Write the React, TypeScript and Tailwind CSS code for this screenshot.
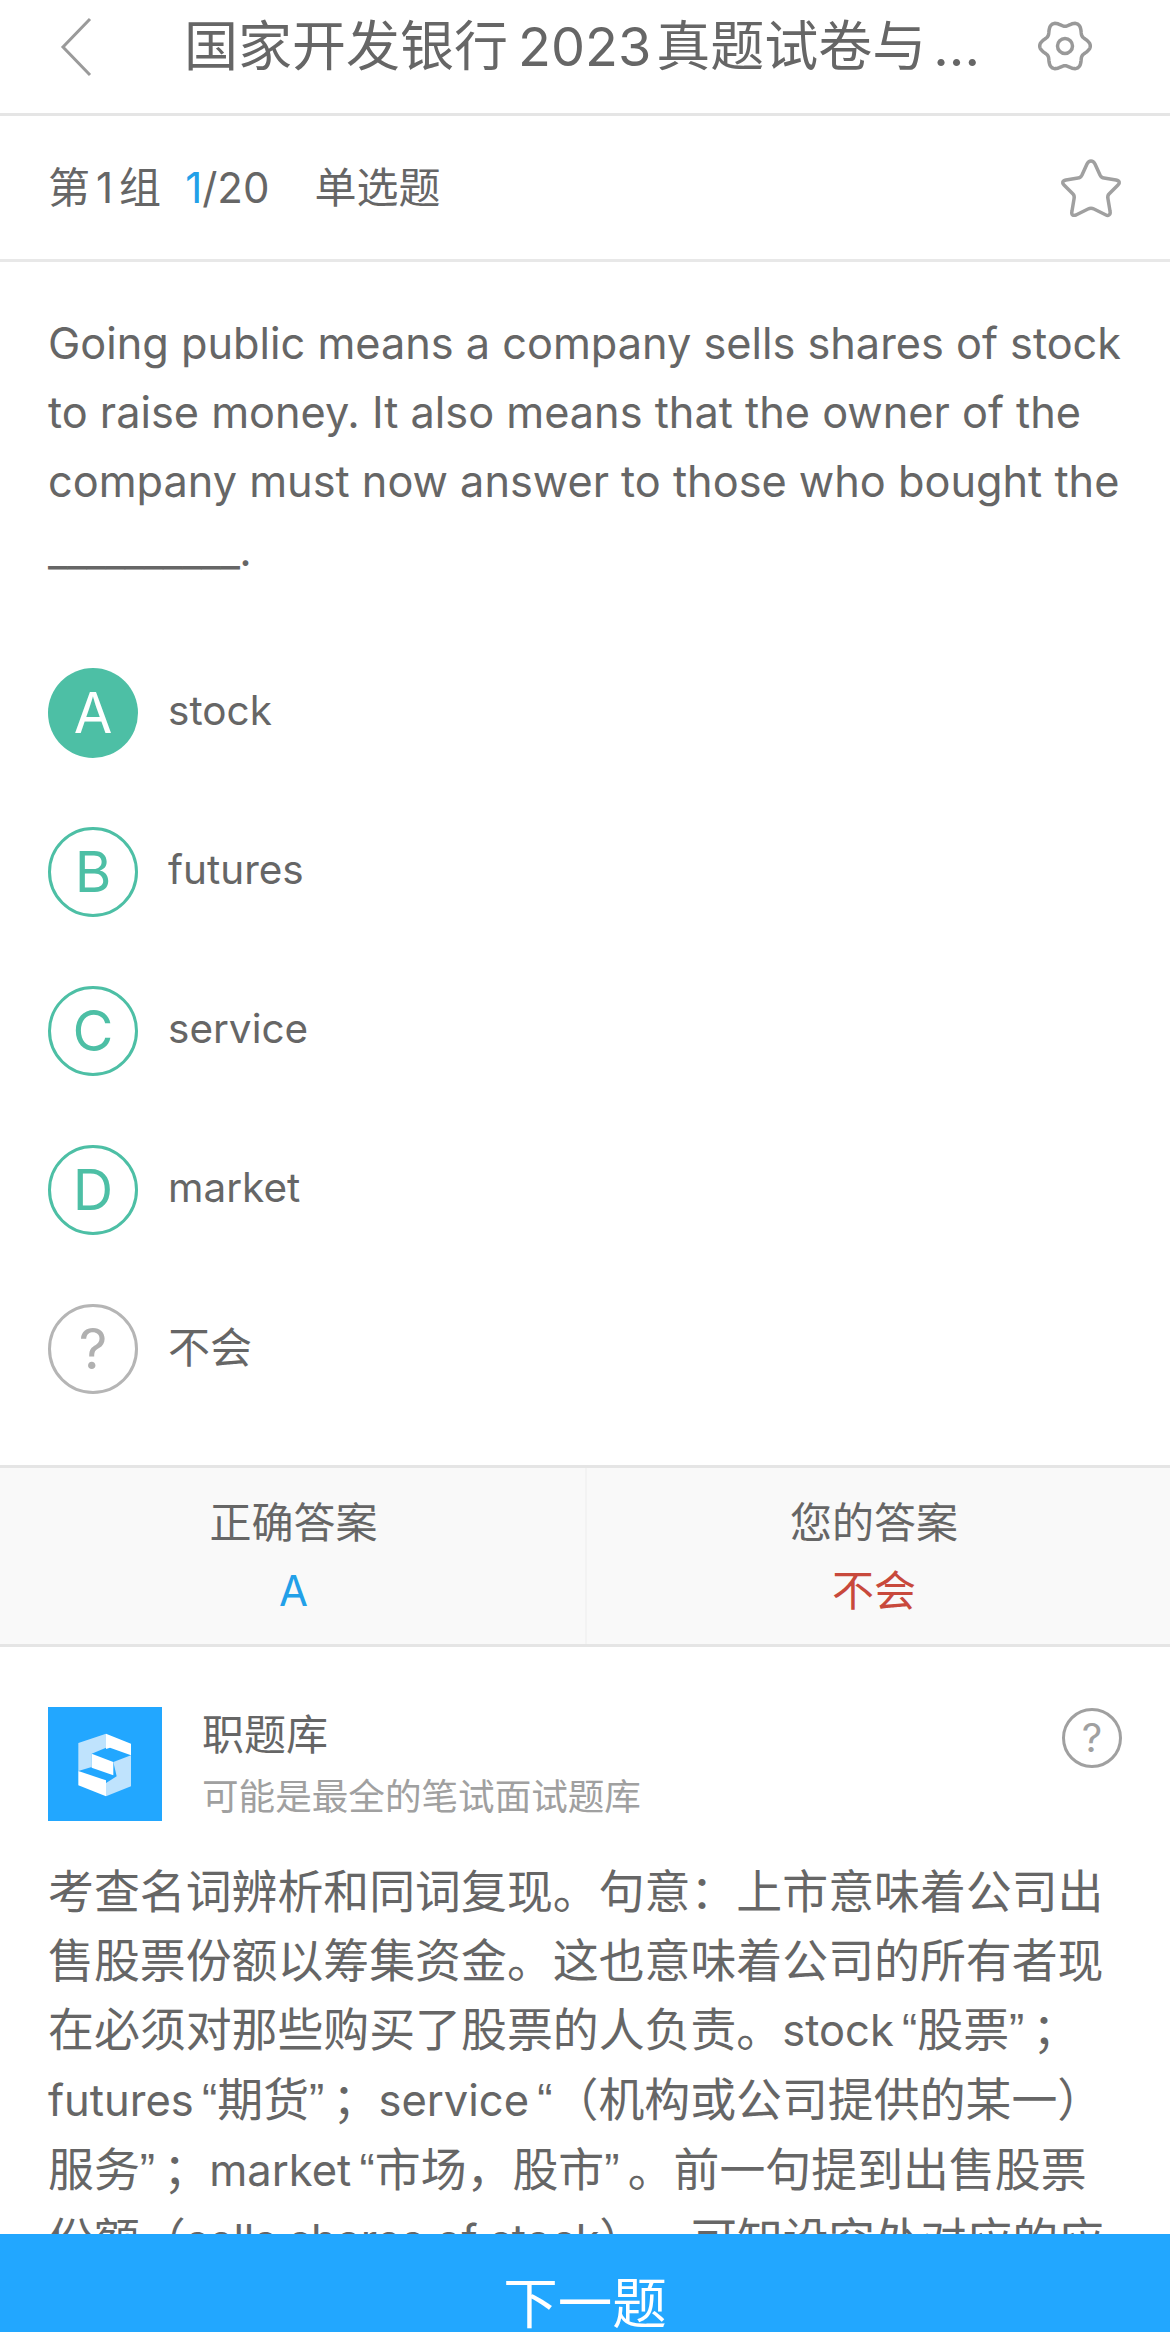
const font = "font-['Inter','Noto_Sans_CJK_SC',sans-serif]";

const gearPath = (() => {
  const pts: string[] = [];
  for (let i = 0; i < 120; i++) {
    const t = (i / 120) * Math.PI * 2;
    const r = 22.5 + 2.8 * Math.cos(6 * t);
    pts.push(`${(27 + r * Math.cos(t)).toFixed(2)} ${(27 + r * Math.sin(t)).toFixed(2)}`);
  }
  return `M${pts.join("L")}Z`;
})();

function L({ children }: { children: string }) {
  return <span className="text-[43.5px]">{children}</span>;
}
function OQ() {
  return <span className="inline-block w-[23.5px] text-right font-['Liberation_Sans',sans-serif]">“</span>;
}
function CQ() {
  return <span className="inline-block w-[23.5px] text-left font-['Liberation_Sans',sans-serif]">”</span>;
}

function Option({ letter, text, filled, gray }: { letter: string; text: string; filled?: boolean; gray?: boolean }) {
  const circle = filled
    ? "bg-[#4dbfa5] text-white"
    : gray
      ? "border-[3px] border-[#b5b5b5] text-[#b0b0b0]"
      : "border-[3px] border-[#4dbfa5] text-[#4dbfa5]";
  return (
    <div className="flex items-center h-[159px]">
      <div className={`w-[90px] h-[90px] rounded-full flex items-center justify-center text-[56px] leading-[90px] shrink-0 ${circle}`}>{letter}</div>
      <div className={`ml-[30px] text-[#666666] relative -top-[1px] ${gray ? "text-[42px]" : "text-[40.5px]"}`}>{text}</div>
    </div>
  );
}

export default function App() {
  return (
    <div className={`w-[1170px] h-[2332px] bg-white flex flex-col overflow-hidden [text-spacing-trim:space-all] ${font}`}>
      <header className="h-[116px] shrink-0 border-b-[3px] border-[#e5e5e5] flex items-start relative">
        <svg className="absolute left-[58px] top-[16px]" width="38" height="62" viewBox="0 0 38 62" fill="none">
          <path d="M32 3 L5 31 L32 59" stroke="#9a9a9a" strokeWidth="3" />
        </svg>
        <div className="ml-[184px] mt-[12px] text-[54px] leading-[70px] text-[#666666] whitespace-nowrap">
          国家开发银行<span className="ml-[10px] mr-[5px]">2023</span>真题试卷与<span className="ml-[7px]">...</span>
        </div>
        <svg className="absolute left-[1038px] top-[19px]" width="54" height="54" viewBox="0 0 54 54" fill="none" stroke="#999999" strokeWidth="3.5">
          <path d={gearPath} />
          <circle cx="27" cy="27" r="7.5" />
        </svg>
      </header>
      <div className="h-[146px] shrink-0 border-b-[3px] border-[#e8e8e8] px-[48px] flex items-center justify-between">
        <div className="text-[42px] text-[#666666] whitespace-nowrap">
          第<span className="mx-[6px]">1</span>组<span className="text-[#22a0e8] ml-[24px]">1</span>/20<span className="ml-[45px]">单选题</span>
        </div>
        <svg width="62" height="60" viewBox="0 0 62 60" fill="none">
          <path d="M31 3 C33 3 34 4 35 6 L40 17 C41 19 42 20 44 20 L56 22 C60 23 60 25 58 27 L49 36 C48 37 47.5 39 48 41 L50 53 C51 57 48 58 46 57 L34 51 C32 50 30 50 28 51 L16 57 C13 58 11 57 12 53 L14 41 C14.5 39 14 37 13 36 L4 27 C2 25 2 23 6 22 L18 20 C20 20 21 19 22 17 L27 6 C28 4 29 3 31 3 Z" stroke="#a0a0a0" strokeWidth="3.5" strokeLinejoin="round" />
        </svg>
      </div>
      <main className="flex-1 min-h-0 overflow-hidden">
        <div className="px-[48px] pt-[47px] text-[43.27px] leading-[69px] text-[#666666] whitespace-nowrap">
          <div>Going public means a company sells shares of stock</div>
          <div>to raise money. It also means that the owner of the</div>
          <div>company must now answer to those who bought the</div>
          <div className="tracking-[-0.6px]">__________.</div>
        </div>
        <div className="px-[48px] mt-[48px]">
          <Option letter="A" text="stock" filled />
          <Option letter="B" text="futures" />
          <Option letter="C" text="service" />
          <Option letter="D" text="market" />
          <Option letter="?" text="不会" gray />
        </div>
        <div className="mt-[37px] h-[182px] border-y-[3px] border-[#e5e5e5] bg-[#f9f9f9] grid grid-cols-[587px_1fr] text-center text-[42px]">
          <div className="border-r-2 border-[#f3f3f3] pl-[2px] pt-[27px] leading-[56px]">
            <div className="text-[#666666]">正确答案</div>
            <div className="text-[#22a0e8] mt-[12px]">A</div>
          </div>
          <div className="pr-[9px] pt-[27px] leading-[56px]">
            <div className="text-[#666666]">您的答案</div>
            <div className="text-[#c8493c] mt-[12px]">不会</div>
          </div>
        </div>
        <div className="px-[48px] pt-[60px] flex">
          <svg className="shrink-0" width="114" height="114" viewBox="54 50 342 342">
            <rect x="54" y="50" width="342" height="342" fill="#22a7ff" />
            <polygon points="145,158 228,130 228,172 185,190 185,230 145,242" fill="#bfe3fd" />
            <polygon points="228,130 303,160 303,195 240,172 228,176" fill="#ffffff" />
            <polygon points="185,190 250,215 250,255 185,232" fill="#ffffff" />
            <polygon points="250,215 303,195 303,288 228,318 228,278 260,258" fill="#bfe3fd" />
            <polygon points="145,242 228,270 228,318 145,285" fill="#ffffff" />
          </svg>
          <div className="ml-[40px] flex-1">
            <div className="text-[42px] leading-[56px] text-[#666666]">职题库</div>
            <div className="text-[36.6px] leading-[48px] text-[#a0a0a0] mt-[10px]">可能是最全的笔试面试题库</div>
          </div>
          <div className="w-[60px] h-[60px] mt-[1px] rounded-full border-[3px] border-[#a0a0a0] text-[#a0a0a0] flex items-center justify-center text-[40px] shrink-0">?</div>
        </div>
        <div className="px-[48px] mt-[36px] text-[45.9px] leading-[69px] text-[#666666] whitespace-nowrap">
          <div>考查名词辨析和同词复现。句意：上市意味着公司出</div>
          <div>售股票份额以筹集资金。这也意味着公司的所有者现</div>
          <div>在必须对那些购买了股票的人负责。<L>stock</L><OQ />股票<CQ />；</div>
          <div><L>futures</L><OQ />期货<CQ />；<L>service</L><OQ />（机构或公司提供的某一）</div>
          <div>服务<CQ />；<L>market</L><OQ />市场，股市<CQ />。前一句提到出售股票</div>
          <div>份额（<span className="tracking-[-0.3px]"><L>sells shares of stock</L></span>），可知设空处对应的应</div>
        </div>
      </main>
      <button className="h-[98px] shrink-0 bg-[#22a7ff] text-white text-[54.5px] leading-[54px] pt-[42px] flex items-start justify-center">下一题</button>
    </div>
  );
}
